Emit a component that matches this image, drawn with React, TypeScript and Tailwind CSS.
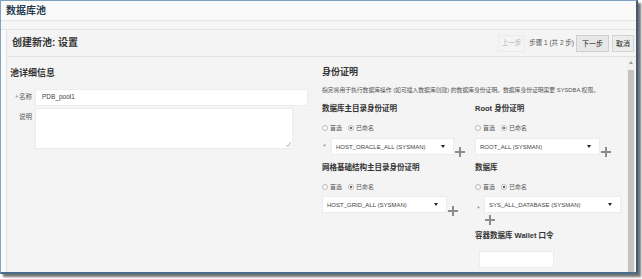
import React from 'react';

const FONT = "font-['Liberation_Sans','Noto_Sans_CJK_SC',sans-serif]";

const Radio = ({ checked }: { checked?: boolean }) => (
  <span className="w-[6px] h-[6px] rounded-full border border-[#b9b9b9] bg-white flex items-center justify-center">
    {checked && <span className="w-[2px] h-[2px] rounded-full bg-[#333]" />}
  </span>
);

const RadioRow = () => (
  <div className="h-[8px] flex items-center gap-[2px] text-[6px] text-[#555] leading-none">
    <Radio />
    <span>首选</span>
    <span className="ml-[2px]" />
    <Radio checked />
    <span>已命名</span>
  </div>
);

const Plus = ({ className = '' }: { className?: string }) => (
  <svg width="10" height="10" viewBox="0 0 10 10" className={`block shrink-0 ${className}`}>
    <rect x="4" y="0" width="2" height="10" fill="#8c8c8c" />
    <rect x="0" y="4" width="10" height="2" fill="#8c8c8c" />
  </svg>
);

const Select = ({ value, w }: { value: string; w: string }) => (
  <div className={`${w} h-[17px] shrink-0 bg-white border border-[#ececec] flex items-center justify-between pl-[4px] pr-[8px] text-[6px] text-[#444] leading-none`}>
    <span>{value}</span>
    <svg width="4" height="3" viewBox="0 0 4 3" className="block">
      <path d="M0 0 L4 0 L2 3 Z" fill="#222" />
    </svg>
  </div>
);

const Star = ({ className = '' }: { className?: string }) => (
  <span className={`block text-[7px] text-[#6d8cab] leading-none ${className}`}>*</span>
);

const SubHead = ({ children, className = '' }: { children: React.ReactNode; className?: string }) => (
  <div className={`h-[10px] text-[7.5px] font-bold text-[#333] leading-[10px] whitespace-nowrap ${className}`}>{children}</div>
);

export default function App() {
  return (
    <div className={`w-[642px] h-[279px] bg-white overflow-hidden text-[7px] leading-none ${FONT}`}>
      <div className="w-[638px] h-[274px] flex flex-col border-l border-t border-r-2 border-b-2 border-l-[#7fa2c1] border-t-[#7fa2c1] border-r-[#3f5c77] border-b-[#4a6d8d] bg-[#fafafa] shadow-[3px_3px_2px_rgba(0,0,0,0.55)]">
        {/* Title */}
        <div className="h-[19px] flex items-center pl-[5px] text-[10px] font-bold text-[#283c50]">数据库池</div>
        <div className="h-[10px] border-y border-[#e4e4e4] bg-[#f6f6f6]" />

        <div className="flex-1 min-h-0 flex flex-col ml-[5px] border-l border-[#dce2e7] bg-[#f4f4f4]">
          {/* Header */}
          <div className="h-[27px] flex items-center justify-between pl-[5px] pr-[2px] border-b border-[#e2e2e2]">
            <span className="text-[10px] font-bold text-[#333]">创建新池: 设置</span>
            <div className="flex items-center text-[6.5px]">
              <span className="h-[17px] px-[3px] flex items-center border border-[#ebebeb] text-[#b3b3b3]">上一步</span>
              <span className="ml-[4px] text-[#555]">步骤 1 (共 2 步)</span>
              <span className="ml-[2px] h-[17px] px-[5px] flex items-center border border-[#cfcfcf] bg-[#e8e8e8] text-[7px] text-[#222]">下一步</span>
              <span className="ml-[3px] h-[17px] px-[3px] flex items-center border border-[#d3d3d3] bg-[#ececec] text-[7px] text-[#222]">取消</span>
            </div>
          </div>

          {/* Body */}
          <div className="flex-1 min-h-0 flex overflow-hidden">
            {/* Pool details */}
            <div className="w-[306px] pl-[3px] pt-[10px]">
              <div className="text-[9px] font-bold text-[#333] leading-[12px]">池详细信息</div>
              <div className="mt-[10px] flex items-center">
                <div className="w-[25px] pr-[3px] flex justify-end gap-[1px] items-center text-[6.5px] text-[#555]">
                  <Star />
                  <span>名称</span>
                </div>
                <div className="w-[273px] h-[17px] bg-white border border-[#ececec] flex items-center pl-[6px] text-[6.5px] text-[#444]">PDB_pool1</div>
              </div>
              <div className="mt-[2px] flex items-start">
                <div className="w-[25px] pr-[3px] pt-[6px] text-right text-[6.5px] text-[#555]">说明</div>
                <div className="w-[258px] h-[41px] bg-white border border-[#ececec] flex items-end justify-end p-[1px]">
                  <svg width="5" height="5" viewBox="0 0 5 5" className="block">
                    <path d="M5 0 L0 5 M5 2.5 L2.5 5" stroke="#999" strokeWidth="0.7" />
                  </svg>
                </div>
              </div>
            </div>

            {/* Credentials */}
            <div className="flex-1 pl-[9px] pt-[9px]">
              <div className="text-[9px] font-bold text-[#333] leading-[12px]">身份证明</div>
              <div className="mt-[9px] text-[5.8px] text-[#555] leading-[7px] whitespace-nowrap">
                指定将用于执行数据库操作 (如可插入数据库创建) 的数据库身份证明。数据库身份证明需要 SYSDBA 权限。
              </div>
              <div className="mt-[10px] flex">
                <div className="w-[153px] flex flex-col">
                  <SubHead>数据库主目录身份证明</SubHead>
                  <div className="mt-[10px]"><RadioRow /></div>
                  <div className="mt-[6px] h-[17px] flex items-center">
                    <Star className="ml-[1px] w-[8px]" />
                    <Select value="HOST_ORACLE_ALL (SYSMAN)" w="w-[123px]" />
                    <Plus className="ml-[1px] mt-[10px]" />
                  </div>
                  <SubHead className="mt-[8px]">网格基础结构主目录身份证明</SubHead>
                  <div className="mt-[10px]"><RadioRow /></div>
                  <div className="mt-[5px] h-[17px] flex items-center">
                    <Select value="HOST_GRID_ALL (SYSMAN)" w="w-[125px]" />
                    <Plus className="ml-[1px] mt-[12px]" />
                  </div>
                </div>
                <div className="flex-1 flex flex-col">
                  <SubHead>Root 身份证明</SubHead>
                  <div className="mt-[10px]"><RadioRow /></div>
                  <div className="mt-[6px] h-[17px] flex items-center">
                    <Select value="ROOT_ALL (SYSMAN)" w="w-[125px]" />
                    <Plus className="ml-[1px] mt-[10px]" />
                  </div>
                  <SubHead className="mt-[8px]">数据库</SubHead>
                  <div className="mt-[10px]"><RadioRow /></div>
                  <div className="mt-[5px] h-[17px] flex items-center">
                    <Star className="ml-[2px] w-[7px] mt-[8px]" />
                    <Select value="SYS_ALL_DATABASE (SYSMAN)" w="w-[137px]" />
                  </div>
                  <Plus className="mt-[2px] ml-[10px]" />
                  <SubHead className="mt-[6px]">容器数据库 Wallet 口令</SubHead>
                  <div className="mt-[10px] ml-[4px] w-[75px] h-[17px] bg-white border border-[#ececec]" />
                </div>
              </div>
            </div>

            {/* Scrollbar */}
            <div className="w-[8px] mr-[1px] bg-[#f1f1f1] flex flex-col items-center pt-[4px]">
              <svg width="4" height="3" viewBox="0 0 4 3" className="block">
                <path d="M2 0 L4 3 L0 3 Z" fill="#9a9a9a" />
              </svg>
              <div className="mt-[6px] w-[6px] flex-1 bg-[#c6c2be]" />
            </div>
          </div>
        </div>
      </div>
    </div>
  );
}
